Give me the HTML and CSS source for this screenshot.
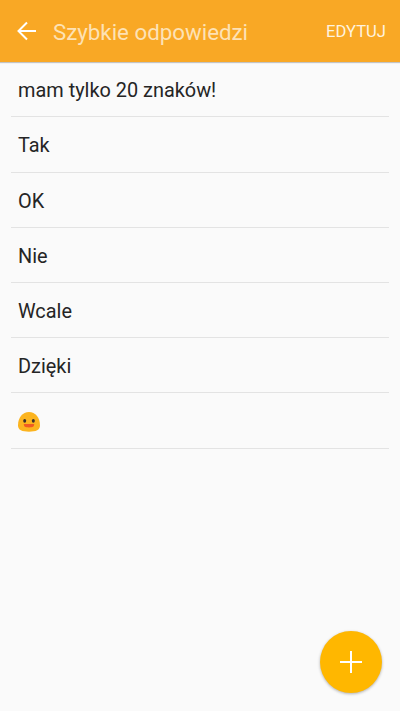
FILE: index.html
```html
<!DOCTYPE html>
<html lang="pl">
<head>
<meta charset="UTF-8">
<meta name="viewport" content="width=device-width, initial-scale=1">
<title>Szybkie odpowiedzi</title>
<link rel="stylesheet" href="styles.css">
</head>
<body>
<header class="header">
  <svg class="back" viewBox="0 0 20 20" width="20" height="20">
    <path d="M19 10H2M10 1.5L1.5 10L10 18.5"/>
  </svg>
  <h1 class="title">Szybkie odpowiedzi</h1>
  <button type="button" class="edit">EDYTUJ</button>
</header>

<ul class="list">
  <li>mam tylko 20 znaków!</li>
  <li>Tak</li>
  <li>OK</li>
  <li>Nie</li>
  <li>Wcale</li>
  <li>Dzięki</li>
  <li>
    <svg class="emoji" viewBox="0 0 22 20" width="22" height="20">
      <path fill="#fcb41f" d="M11 0C4.600 0 0 5.500 0 13.500C0 18 4 19.700 11 19.700S22 18 22 13.500C22 5.500 17.400 0 11 0Z"/>
      <ellipse cx="6.700" cy="8.800" rx="1.500" ry="1.900" fill="#3b2f2b"/>
      <ellipse cx="15.300" cy="8.800" rx="1.500" ry="1.900" fill="#3b2f2b"/>
      <path fill="#f05a22" d="M5.800 12H16.200C16.200 14.500 15 15.400 11 15.400S5.800 14.500 5.800 12Z"/>
    </svg>
  </li>
</ul>

<button type="button" class="add">
  <svg viewBox="0 0 22 22" width="22" height="22">
    <path d="M11 0V22M0 11H22"/>
  </svg>
</button>
</body>
</html>
```

FILE: styles.css
```css
body {
  margin: 0;
  height: 711px;
  overflow: hidden;
  background: #fafafa;
  color: #252525;
  font-family: Roboto, sans-serif;
}
button {
  border: 0;
  padding: 0;
  font-family: inherit;
}
.header {
  display: flex;
  align-items: center;
  box-sizing: border-box;
  height: 62px;
  padding: 0 14px 0 17px;
  background: #f9a825;
  box-shadow: 0 1px 1px rgba(0, 0, 0, 0.22);
}
.back {
  fill: none;
  stroke: #fff;
  stroke-width: 2;
}
.title {
  flex: 1;
  margin: 1px 0 0 16px;
  color: #fde2b5;
  font-size: 22.3px;
  font-weight: 400;
  line-height: 28px;
}
.edit {
  background: none;
  color: #fff3df;
  font-size: 16.6px;
}
.list {
  margin: 0 11px;
  padding: 0;
  list-style: none;
}
.list li {
  display: flex;
  align-items: center;
  box-sizing: border-box;
  height: 55.2px;
  padding: 3px 7px 0;
  border-bottom: 1px solid #e3e3e3;
  font-size: 19.9px;
}
.list li:first-child {
  height: 55.4px;
}
.add {
  position: absolute;
  right: 18px;
  bottom: 18px;
  display: flex;
  align-items: center;
  justify-content: center;
  width: 62px;
  height: 62px;
  border-radius: 50%;
  background: #ffb700;
  box-shadow: 0 1px 3px rgba(0, 0, 0, 0.3);
}
.add path {
  stroke: #fff;
  stroke-width: 2;
}
```
